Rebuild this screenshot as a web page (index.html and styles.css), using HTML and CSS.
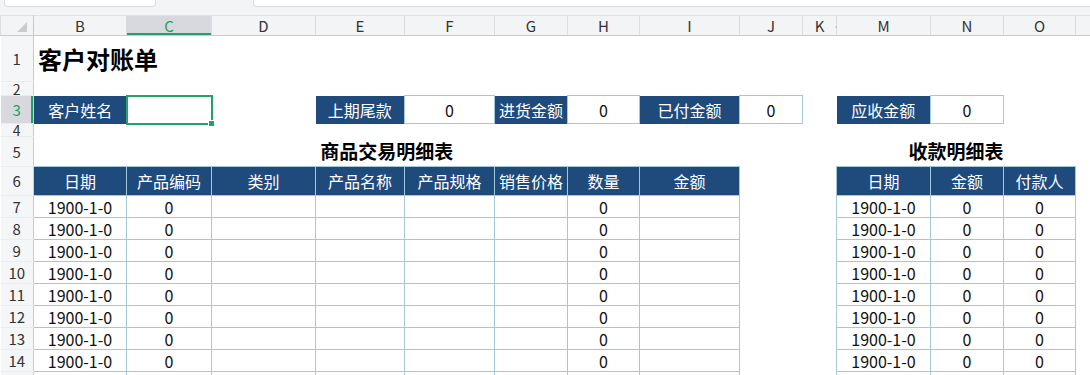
FILE: index.html
```html
<!DOCTYPE html>
<html lang="zh">

<head>
    <meta charset="utf-8">
    <title>客户对账单</title>
    <link rel="stylesheet" href="styles.css">
</head>

<body>

    <div class="fbar">
        <div class="namebox"></div>
        <div class="fxicons"></div>
        <div class="fbox"></div>
    </div>

    <table class="sheet">
        <colgroup>
            <col class="w-rh">
            <col class="w-b">
            <col class="w-c">
            <col class="w-d">
            <col class="w-e">
            <col class="w-f">
            <col class="w-g">
            <col class="w-h">
            <col class="w-i">
            <col class="w-j">
            <col class="w-k">
            <col class="w-m">
            <col class="w-n">
            <col class="w-o">
            <col class="w-p">
        </colgroup>

        <tr class="hd">
            <th class="corner">
                <svg width="10" height="10" viewBox="0 0 10 10"><polygon points="10,0 10,10 0,10" fill="#c9cbce"/></svg>
                <span class="hidmark left">▸</span>
            </th>
            <th>B</th>
            <th class="selcol">C</th>
            <th>D</th>
            <th>E</th>
            <th>F</th>
            <th>G</th>
            <th>H</th>
            <th>I</th>
            <th>J</th>
            <th class="kcol">K<span class="hidmark">◂▸</span></th>
            <th>M</th>
            <th>N</th>
            <th>O</th>
            <th></th>
        </tr>

        <tr class="r1">
            <th class="rh">1</th>
            <td colspan="14" class="title">客户对账单</td>
        </tr>
        <tr class="r2">
            <th class="rh">2</th>
            <td colspan="14"></td>
        </tr>
        <tr class="r3">
            <th class="rh selrow">3</th>
            <td class="lab">客户姓名</td>
            <td class="cur"><div class="selbox"><i></i></div></td>
            <td></td>
            <td class="lab">上期尾款</td>
            <td class="val">0</td>
            <td class="lab">进货金额</td>
            <td class="val">0</td>
            <td class="lab">已付金额</td>
            <td class="val">0</td>
            <td></td>
            <td class="lab">应收金额</td>
            <td class="val">0</td>
            <td></td>
            <td></td>
        </tr>
        <tr class="r4">
            <th class="rh">4</th>
            <td colspan="14"></td>
        </tr>
        <tr class="r5">
            <th class="rh">5</th>
            <td colspan="8" class="sec">商品交易明细表</td>
            <td colspan="2"></td>
            <td colspan="3" class="sec">收款明细表</td>
            <td></td>
        </tr>
        <tr class="r6">
            <th class="rh">6</th>
            <td class="h">日期</td>
            <td class="h">产品编码</td>
            <td class="h">类别</td>
            <td class="h">产品名称</td>
            <td class="h">产品规格</td>
            <td class="h">销售价格</td>
            <td class="h">数量</td>
            <td class="h">金额</td>
            <td></td>
            <td></td>
            <td class="h">日期</td>
            <td class="h">金额</td>
            <td class="h">付款人</td>
            <td></td>
        </tr>

        <tr class="rw">
            <th class="rh">7</th>
            <td class="c">1900-1-0</td><td class="c">0</td><td class="c"></td><td class="c"></td><td class="c"></td><td class="c"></td><td class="c">0</td><td class="c"></td>
            <td></td><td></td>
            <td class="c">1900-1-0</td><td class="c">0</td><td class="c">0</td><td></td>
        </tr>
        <tr class="rw">
            <th class="rh">8</th>
            <td class="c">1900-1-0</td><td class="c">0</td><td class="c"></td><td class="c"></td><td class="c"></td><td class="c"></td><td class="c">0</td><td class="c"></td>
            <td></td><td></td>
            <td class="c">1900-1-0</td><td class="c">0</td><td class="c">0</td><td></td>
        </tr>
        <tr class="rw">
            <th class="rh">9</th>
            <td class="c">1900-1-0</td><td class="c">0</td><td class="c"></td><td class="c"></td><td class="c"></td><td class="c"></td><td class="c">0</td><td class="c"></td>
            <td></td><td></td>
            <td class="c">1900-1-0</td><td class="c">0</td><td class="c">0</td><td></td>
        </tr>
        <tr class="rw">
            <th class="rh">10</th>
            <td class="c">1900-1-0</td><td class="c">0</td><td class="c"></td><td class="c"></td><td class="c"></td><td class="c"></td><td class="c">0</td><td class="c"></td>
            <td></td><td></td>
            <td class="c">1900-1-0</td><td class="c">0</td><td class="c">0</td><td></td>
        </tr>
        <tr class="rw">
            <th class="rh">11</th>
            <td class="c">1900-1-0</td><td class="c">0</td><td class="c"></td><td class="c"></td><td class="c"></td><td class="c"></td><td class="c">0</td><td class="c"></td>
            <td></td><td></td>
            <td class="c">1900-1-0</td><td class="c">0</td><td class="c">0</td><td></td>
        </tr>
        <tr class="rw">
            <th class="rh">12</th>
            <td class="c">1900-1-0</td><td class="c">0</td><td class="c"></td><td class="c"></td><td class="c"></td><td class="c"></td><td class="c">0</td><td class="c"></td>
            <td></td><td></td>
            <td class="c">1900-1-0</td><td class="c">0</td><td class="c">0</td><td></td>
        </tr>
        <tr class="rw">
            <th class="rh">13</th>
            <td class="c">1900-1-0</td><td class="c">0</td><td class="c"></td><td class="c"></td><td class="c"></td><td class="c"></td><td class="c">0</td><td class="c"></td>
            <td></td><td></td>
            <td class="c">1900-1-0</td><td class="c">0</td><td class="c">0</td><td></td>
        </tr>
        <tr class="rw">
            <th class="rh">14</th>
            <td class="c">1900-1-0</td><td class="c">0</td><td class="c"></td><td class="c"></td><td class="c"></td><td class="c"></td><td class="c">0</td><td class="c"></td>
            <td></td><td></td>
            <td class="c">1900-1-0</td><td class="c">0</td><td class="c">0</td><td></td>
        </tr>
        <tr class="rw">
            <th class="rh"></th>
            <td class="c"></td><td class="c"></td><td class="c"></td><td class="c"></td><td class="c"></td><td class="c"></td><td class="c"></td><td class="c"></td>
            <td></td><td></td>
            <td class="c"></td><td class="c"></td><td class="c"></td><td></td>
        </tr>
    </table>

</body>

</html>
```

FILE: styles.css
```css
body {
    margin: 0;
    padding: 0;
    background-color: white;
    font-family: "Noto Sans CJK SC", "Liberation Sans", sans-serif;
    color: #111;
    overflow: hidden;
}

/* formula bar remnant */
.fbar {
    height: 15px;
    background-color: #f3f4f6;
    display: flex;
    align-items: flex-start;
}

.namebox {
    width: 150px;
    height: 6px;
    margin-left: 4px;
    background-color: white;
    border: 1px solid #d9dadc;
    border-top: none;
    border-radius: 0 0 4px 4px;
}

.fxicons {
    width: 97px;
}

.fbox {
    flex: 1;
    height: 6px;
    background-color: white;
    border: 1px solid #d9dadc;
    border-top: none;
    border-right: none;
    border-radius: 0 0 0 4px;
}

/* sheet */
.sheet {
    border-collapse: collapse;
    table-layout: fixed;
    width: 1115px;
}

.w-rh { width: 33px; }
.w-b { width: 93px; }
.w-c { width: 85px; }
.w-d { width: 104px; }
.w-e { width: 89px; }
.w-f { width: 90px; }
.w-g { width: 73px; }
.w-h { width: 72px; }
.w-i { width: 100px; }
.w-j { width: 63px; }
.w-k { width: 34px; }
.w-m { width: 94px; }
.w-n { width: 73px; }
.w-o { width: 72px; }
.w-p { width: 40px; }

.sheet th,
.sheet td {
    padding: 0;
    font-weight: normal;
    font-size: 16px;
    line-height: 18px;
    text-align: center;
    white-space: nowrap;
    overflow: hidden;
}

.hd {
    height: 20px;
}

.hd th {
    background-color: #f3f4f6;
    color: #333;
    font-size: 15px;
    border-top: 1px solid #e1e2e4;
    border-bottom: 1px solid #c9cacc;
    border-left: 1px solid #dcdde0;
    position: relative;
}

.sheet .corner {
    text-align: right;
    vertical-align: bottom;
    padding-right: 4px;
    border-right: 1px solid #c9cacc;
    overflow: visible;
}

.corner svg {
    display: block;
    margin: 0 0 3px 16px;
}

.hd .selcol {
    background-color: #d7d9de;
    color: #1f9e60;
    box-shadow: inset 0 -2px 0 #21a366;
}

.hidmark {
    position: absolute;
    top: 5px;
    right: -5px;
    font-size: 8px;
    line-height: 10px;
    color: #b9bbbe;
    letter-spacing: -1px;
}

.hidmark.left {
    right: -4px;
    top: 4px;
}

.sheet .kcol {
    overflow: visible;
}

.rh {
    background-color: #f5f6f7;
    color: #333;
    border-right: 1px solid #c9cacc;
    border-bottom: 1px solid #ebecee;
}

.sheet th.rh {
    font-size: 15px;
}

.selrow {
    background-color: #d7d9de !important;
    color: #1f9e60 !important;
    box-shadow: inset -2px 0 0 #21a366;
}

.r1 { height: 46px; }
.r2 { height: 14px; }
.r3 { height: 28px; }
.r4 { height: 13px; }
.r5 { height: 30px; }
.r6 { height: 29px; }
.rw { height: 22px; }

.sheet .r2 .rh,
.sheet .r4 .rh {
    font-size: 14px;
    line-height: 12px;
    overflow: visible;
}

.sheet .title {
    text-align: left;
    padding-left: 4px;
    font-size: 24px;
    line-height: 28px;
    font-weight: bold;
    color: #000;
}

.sheet .sec {
    font-size: 19px;
    line-height: 24px;
    font-weight: bold;
    color: #000;
}

.lab {
    background-color: #1f4a7c;
    color: white;
}

.val {
    border: 1px solid #a3c8d8;
}

.sheet .cur {
    position: relative;
    overflow: visible;
}

.selbox {
    position: absolute;
    top: -1px;
    left: -1px;
    right: -1px;
    bottom: -1px;
    border: 2px solid #21a366;
}

.selbox i {
    position: absolute;
    right: -4px;
    bottom: -4px;
    width: 5px;
    height: 5px;
    background-color: #21a366;
    border: 1px solid white;
}

.h {
    background-color: #1f4a7c;
    color: white;
    border: 1px solid #a3c8d8;
}

.c {
    border: 1px solid #a3c8d8;
}

.rw:last-child .c {
    border-bottom: none;
}
```
